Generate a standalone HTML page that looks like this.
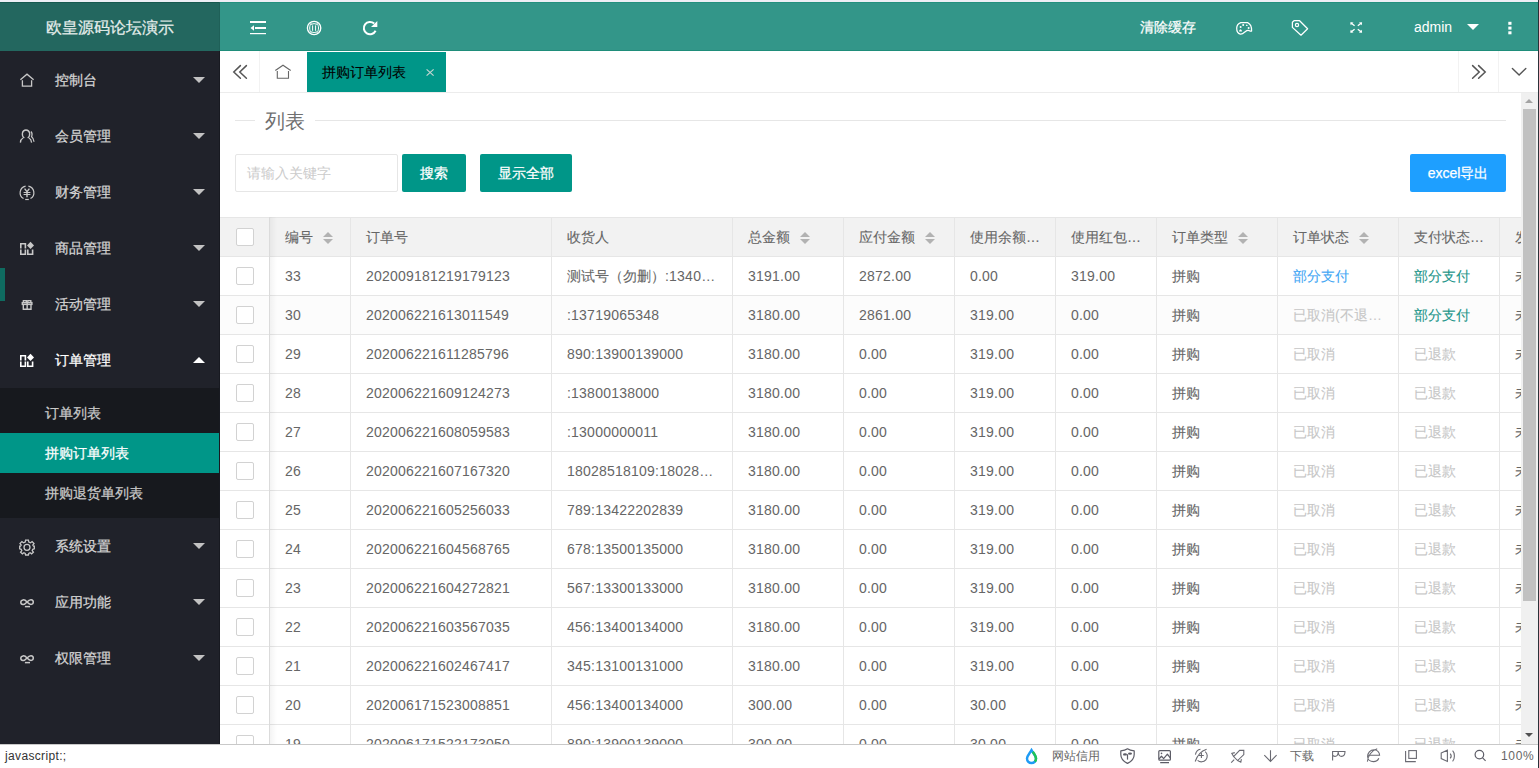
<!DOCTYPE html>
<html><head><meta charset="utf-8">
<style>
*{margin:0;padding:0;box-sizing:border-box}
html,body{width:1539px;height:768px;overflow:hidden;background:#fff;font-family:"Liberation Sans",sans-serif;font-size:14px;color:#666}
.a{position:absolute}
svg{position:absolute;overflow:visible}
#strip{left:0;top:0;width:1539px;height:2px;background:#eeeef5}
#logo{left:0;top:2px;width:220px;height:49px;background:#23675f;border-top:1px solid #17594f;color:#e6eeec;font-size:16px;line-height:49px;text-align:center}
#logo:after{content:"";position:absolute;right:0;top:-1px;width:1px;height:49px;background:#1f6058}
#hdr{left:220px;top:2px;width:1319px;height:49px;background:#339689;border-top:1px solid #23907e;border-bottom:1px solid #1f8d7a}
.hw{position:absolute;color:#fff;font-size:14px;line-height:16px}
#side{left:0;top:51px;width:220px;height:693px;background:#20222a}
#side:after{content:"";position:absolute;right:0;top:0;width:1px;height:693px;background:#181a21}
.mi{position:absolute;left:0;width:219px;height:56px;line-height:56px;color:#d4d4d4;font-size:14px}
.mi span{position:absolute;left:55px;top:0}
.mi.on{color:#fff}
.tri{position:absolute;left:193px;top:25px;width:0;height:0;border-left:6px solid transparent;border-right:6px solid transparent;border-top:6px solid #c2c2c2}
.tri.up{border-top:0;border-bottom:6px solid #fff}
#navbar{left:0;top:268px;width:5px;height:33px;background:#0f6b60}
#sub{left:0;top:388px;width:219px;height:130px;background:#17191e}
.si{position:absolute;left:0;width:219px;height:40px;line-height:40px;color:#c9c9c9;padding-left:45px}
.si.on{background:#009688;color:#fff}
#tabs{left:220px;top:51px;width:1318px;height:42px;background:#fff;border-bottom:1px solid #ececec}
.tsep{position:absolute;top:51px;width:1px;height:41px;background:#f2f2f2}
#acttab{left:307px;top:52px;width:139px;height:40px;background:#009688;color:#000;line-height:40px;padding-left:15px}
#content{left:220px;top:93px;width:1301px;height:651px;background:#fff}
#fs{left:235px;top:120px;width:1271px;height:1px;background:#e6e6e6}
#legend{left:255px;top:106px;width:60px;height:30px;background:#fff;color:#707070;font-size:20px;line-height:30px;padding-left:10px}
#inp{left:235px;top:154px;width:163px;height:38px;border:1px solid #e6e6e6;border-radius:2px;color:#cbcbcb;line-height:36px;padding-left:11px}
.btn{position:absolute;top:154px;height:38px;line-height:38px;background:#009688;color:#fff;text-align:center;border-radius:2px}
#tbl{left:220px;top:217px;width:1301px;height:527px;overflow:hidden}
.thbg{position:absolute;left:0;width:1301px;background:#f2f2f2;border-top:1px solid #e6e6e6;border-bottom:1px solid #e6e6e6}
.tr{position:absolute;left:0;width:1301px;height:39px;border-bottom:1px solid #e6e6e6;background:#fff}
.tr.hov{background:#fcfcfc}
.vl{position:absolute;top:0;width:1px;height:527px;background:#e6e6e6}
.th{position:absolute;top:1px;height:39px;line-height:39px;color:#666;white-space:nowrap}
.td{position:absolute;height:39px;line-height:39px;color:#666;white-space:nowrap}
.td.b{color:#3fa6f4}
.td.g{color:#1a9488}
.td.c{color:#c6c6c6}
.cb{position:absolute;width:18px;height:18px;border:1px solid #d2d2d2;border-radius:2px;background:#fff}
.sort{position:absolute;display:inline-block;width:10px;height:12px;margin-left:10px;top:14px}
.su{position:absolute;left:0;top:0;border-left:5px solid transparent;border-right:5px solid transparent;border-bottom:5px solid #b2b2b2}
.sd{position:absolute;left:0;top:7px;border-left:5px solid transparent;border-right:5px solid transparent;border-top:5px solid #b2b2b2}
.fshadow{position:absolute;left:49px;top:0;width:8px;height:527px;background:linear-gradient(to right,rgba(0,0,0,.05),rgba(0,0,0,0))}
#sb{left:1521px;top:93px;width:17px;height:651px;background:#f0f0f0}
.sbthumb{position:absolute;left:2px;top:16px;width:13px;height:492px;background:#c1c1c1}
.sbu{position:absolute;left:4px;top:6px;border-left:4px solid transparent;border-right:4px solid transparent;border-bottom:4px solid #a3a3a3}
.sbd{position:absolute;left:4px;top:640px;border-left:4px solid transparent;border-right:4px solid transparent;border-top:4px solid #505050}
#rline{left:1538px;top:0;width:1px;height:768px;background:#2b3139}
#status{left:0;top:744px;width:1539px;height:24px;background:#fff;border-top:1px solid #c9c9c9}
.st{position:absolute;top:748px;font-size:12px;color:#666;line-height:16px}
.td{letter-spacing:.22px}
.cj{font-style:normal;letter-spacing:0}
.mi span,.si,#logo,.btn,.hwc{-webkit-text-stroke:0.25px currentColor}
#acttab,.th,.cj{-webkit-text-stroke:0.1px currentColor}

</style></head><body>
<div id="strip" class="a"></div>
<div id="logo" class="a">欧皇源码论坛演示</div>
<div id="hdr" class="a"></div>
<svg style="left:0;top:0" width="1539" height="51" viewBox="0 0 1539 51">
 <g fill="#fff">
  <rect x="250" y="21" width="16" height="2"/>
  <rect x="255" y="27" width="11" height="2"/>
  <polygon points="250.5,28 254,25.3 254,30.7"/>
  <rect x="250" y="33" width="16" height="1.2"/>
 </g>
 <g fill="none" stroke="#fff">
  <circle cx="314.1" cy="28" r="6.7" stroke-width="1.3"/>
  <path d="M311.2 23.2 C309.2 25.8 309.2 30.2 311.2 32.8 M317 23.2 C319 25.8 319 30.2 317 32.8" stroke-width="1"/>
  <path d="M312.6 25.4 L312.6 30.8 M315.6 25.4 L315.6 30.8" stroke-width="1"/>
  <path d="M310.9 24.4 Q314.1 22.8 317.3 24.4 M310.9 31.8 Q314.1 33.4 317.3 31.8" stroke-width="1"/>
  <path d="M375.6 30.8 A6.2 6.2 0 1 1 374.2 23.5" stroke-width="2"/>
 </g>
 <polygon points="377.3,21 377.3,26.9 371,26.9" fill="#fff"/>
 <g fill="none" stroke="#fff" stroke-width="1.25" stroke-linejoin="round">
  <path d="M1240.8 22.6 L1247.6 22.6 C1250.2 23.8 1251.8 27 1251.6 31 L1250 31 C1248.5 30 1247 30.2 1245.5 31.5 C1243.5 33.2 1242 34.6 1240.4 34.2 C1238 33.5 1236.6 31 1236.7 28 C1236.8 25.5 1238.3 23.5 1240.8 22.6 Z"/>
  <path d="M1294 20.7 L1299.6 20.7 L1307.6 28.8 L1301 35.2 L1292.4 27.4 L1292.4 22.2 Z"/>
  <circle cx="1297" cy="25" r="1.6"/>
 </g>
 <g fill="#fff">
  <circle cx="1243.2" cy="24.9" r="1"/>
  <polygon points="1245.8,26 1246.8,24.2 1247.8,26"/>
  <circle cx="1240.6" cy="27" r="1"/>
  <circle cx="1248.6" cy="28" r="1"/>
  <path d="M1239 31.6 L1239.5 30 L1240.5 29.2 L1241.6 30 L1242 31.6 Z"/>
 </g>
 <g fill="none" stroke="#fff" stroke-width="1.3">
  <path d="M1351 23 L1354.6 25.8 M1361.4 23 L1357.8 25.8 M1351 32 L1354.6 29.2 M1361.4 32 L1357.8 29.2"/>
 </g>
 <g fill="#fff">
  <polygon points="1350.3,22.2 1353.5,22.6 1350.7,25.2"/>
  <polygon points="1362.1,22.2 1358.9,22.6 1361.7,25.2"/>
  <polygon points="1350.3,32.8 1353.5,32.4 1350.7,29.8"/>
  <polygon points="1362.1,32.8 1358.9,32.4 1361.7,29.8"/>
  <polygon points="1467,24 1479,24 1473,30"/>
  <rect x="1508.3" y="21.8" width="3.2" height="3"/>
  <rect x="1508.3" y="26.6" width="3.2" height="3"/>
  <rect x="1508.3" y="31.3" width="3.2" height="3"/>
 </g>
</svg>
<div class="hw hwc" style="left:1140px;top:19px">清除缓存</div>
<div class="hw" style="left:1414px;top:19px;font-size:14px">admin</div>

<div id="side" class="a"></div>
<div id="navbar" class="a"></div>
<div id="sub" class="a">
 <div class="si" style="top:5px">订单列表</div>
 <div class="si on" style="top:45px">拼购订单列表</div>
 <div class="si" style="top:85px">拼购退货单列表</div>
</div>
<div class="mi" style="top:52px"><span>控制台</span><i class="tri"></i></div>
<div class="mi" style="top:108px"><span>会员管理</span><i class="tri"></i></div>
<div class="mi" style="top:164px"><span>财务管理</span><i class="tri"></i></div>
<div class="mi" style="top:220px"><span>商品管理</span><i class="tri"></i></div>
<div class="mi" style="top:276px"><span>活动管理</span><i class="tri"></i></div>
<div class="mi on" style="top:332px"><span>订单管理</span><i class="tri up"></i></div>
<div class="mi" style="top:518px"><span>系统设置</span><i class="tri"></i></div>
<div class="mi" style="top:574px"><span>应用功能</span><i class="tri"></i></div>
<div class="mi" style="top:630px"><span>权限管理</span><i class="tri"></i></div>
<svg style="left:0;top:0" width="220" height="744" viewBox="0 0 220 744">
 <g fill="none" stroke="#c8c8c8" stroke-width="1.3">
  <path d="M20.4 79.8 L27 74.2 L33.6 79.8 M22.4 80.2 L22.4 86.2 L31.6 86.2 L31.6 80.2"/>
  <path d="M24.3 138 C22.5 136.8 22.2 134.6 22.4 133.2 C22.8 131 24.3 130 26 130 C27.7 130 29.2 131 29.6 133.2 C29.8 134.6 29.5 136.8 27.7 138"/>
  <path d="M23 138 C21.2 139 20.5 140.5 20.4 142.6 M29 138 C30.8 139 31.4 140.5 31.6 142.6"/>
  <path d="M30.8 131.6 C32 132.4 32.4 134.2 31.6 136.8 C33 137.8 33.8 139.5 34 141.8"/>
  <path d="M25.6 186.05 A6.8 6.8 0 0 0 23.5 198.6 M28.4 186.05 A6.8 6.8 0 0 1 30.5 198.6" stroke-width="1.2"/>
  <path d="M25.2 199.5 L28.8 199.5" stroke-width="1.2"/>
  <path d="M24.6 188.6 L27 191.6 L29.4 188.6 M27 191.6 L27 197.2" stroke-width="1.4"/>
  <path d="M23.6 192.5 L30.4 192.5 M23.6 194.5 L30.4 194.5" stroke-width="1"/>
 </g>
 <g fill="none" stroke-width="1.6">
  <path stroke="#c8c8c8" d="M20.8 248.6 L20.8 243.8 L25.4 243.8 L25.4 248.6 M20.8 249.6 L20.8 254.2 L25.4 254.2 L25.4 249.6 M27.8 249.6 L27.8 254.2 L32.6 254.2 L32.6 249.6"/>
  <path stroke="#ffffff" d="M20.8 360.6 L20.8 355.8 L25.4 355.8 L25.4 360.6 M20.8 361.6 L20.8 366.2 L25.4 366.2 L25.4 361.6 M27.8 361.6 L27.8 366.2 L32.6 366.2 L32.6 361.6"/>
 </g>
 <polygon points="30.5,241.8 34,245.4 30.5,249 27,245.4" fill="#c8c8c8"/>
 <polygon points="30.5,353.8 34,357.4 30.5,361 27,357.4" fill="#ffffff"/>
 <g fill="none" stroke="#c8c8c8" stroke-width="1.4">
  <path d="M23.4 302.2 L23.4 300.6 L26.3 300.6 L26.3 302 M27.8 302 L27.8 300.6 L30.8 300.6 L30.8 302.2"/>
  <rect x="22.3" y="302.6" width="9.6" height="1.8"/>
  <path d="M23.3 304.6 L23.3 309.3 L31 309.3 L31 304.6 M27.15 302.6 L27.15 309.3"/>
 </g>
 <g fill="none" stroke="#c8c8c8" stroke-width="1.3">
  <path d="M25.6 540.2 L28.4 540.2 L28.8 542 L30.6 542.8 L32.1 541.6 L34 543.6 L32.8 545.1 L33.5 546.2 L34.3 546.2 L34.3 548.8 L32.8 549.3 L32.2 550.6 L33.4 552.1 L31.6 553.8 L30.1 552.8 L28.8 553.5 L28.4 555 L25.6 555 L25.2 553.5 L23.9 552.8 L22.4 553.8 L20.6 552.1 L21.8 550.6 L21.2 549.3 L19.7 548.8 L19.7 546.2 L20.5 546.2 L21.2 545.1 L20 543.6 L21.9 541.6 L23.4 542.8 L25.2 542 Z"/>
  <circle cx="27" cy="547.3" r="3"/>
 </g>
 <g fill="none" stroke="#c8c8c8" stroke-width="1.5">
  <path d="M27 602 C25.5 600.2 24 599.7 23 599.9 C21.4 600.2 20.8 601.2 20.8 602.2 C20.8 603.3 21.6 604.4 23 604.5 C24.4 604.6 25.7 603.5 27 602 C28.3 600.5 29.6 599.6 31.1 599.7 C32.6 599.8 33.3 600.9 33.3 602.1 C33.3 603.3 32.5 604.4 31 604.4 C29.6 604.4 28.4 603.5 27 602 Z"/>
  <path d="M24.9 606.6 L30 606.6"/>
  <path d="M27 658 C25.5 656.2 24 655.7 23 655.9 C21.4 656.2 20.8 657.2 20.8 658.2 C20.8 659.3 21.6 660.4 23 660.5 C24.4 660.6 25.7 659.5 27 658 C28.3 656.5 29.6 655.6 31.1 655.7 C32.6 655.8 33.3 656.9 33.3 658.1 C33.3 659.3 32.5 660.4 31 660.4 C29.6 660.4 28.4 659.5 27 658 Z"/>
  <path d="M24.9 662.6 L30 662.6"/>
 </g>
</svg>

<div id="tabs" class="a"></div>
<div class="tsep" style="left:259px"></div>
<div class="tsep" style="left:1458px"></div>
<div class="tsep" style="left:1498px"></div>
<div id="acttab" class="a">拼购订单列表</div>
<svg style="left:0;top:0" width="1539" height="93" viewBox="0 0 1539 93">
 <g fill="none" stroke="#555" stroke-width="1.5" stroke-linecap="round">
  <path d="M240.4 65.6 L233.8 72 L240.4 78.2 M246.4 65.6 L239.8 72 L246.4 78.2"/>
  <path d="M1472.6 65.6 L1479.2 72 L1472.6 78.2 M1478.6 65.6 L1485.2 72 L1478.6 78.2"/>
  <path d="M1512.4 68.4 L1519.1 75 L1525.8 68.4" stroke-width="1.4"/>
 </g>
 <g fill="none" stroke="#666" stroke-width="1.1">
  <path d="M275.3 70.5 L283 65.2 L290.7 70.5 M277.3 71 L277.3 78.3 L288.5 78.3 L288.5 71"/>
 </g>
 <path d="M426.6 69.4 L433.6 75.6 M433.6 69.4 L426.6 75.6" fill="none" stroke="#c5d6d2" stroke-width="1.2"/>
</svg>

<div id="fs" class="a"></div>
<div id="legend" class="a">列表</div>
<div id="inp" class="a">请输入关键字</div>
<div class="btn" style="left:402px;width:64px">搜索</div>
<div class="btn" style="left:480px;width:92px">显示全部</div>
<div class="btn" style="left:1410px;width:96px;background:#1e9fff">excel导出</div>

<div id="tbl" class="a">
<div class="thbg" style="top:0;height:40px"></div>
<div class="tr" style="top:40px"></div>
<div class="tr hov" style="top:79px"></div>
<div class="tr" style="top:118px"></div>
<div class="tr" style="top:157px"></div>
<div class="tr" style="top:196px"></div>
<div class="tr" style="top:235px"></div>
<div class="tr" style="top:274px"></div>
<div class="tr" style="top:313px"></div>
<div class="tr" style="top:352px"></div>
<div class="tr" style="top:391px"></div>
<div class="tr" style="top:430px"></div>
<div class="tr" style="top:469px"></div>
<div class="tr" style="top:508px"></div>
<div class="vl" style="left:49px"></div>
<div class="vl" style="left:130px"></div>
<div class="vl" style="left:331px"></div>
<div class="vl" style="left:512px"></div>
<div class="vl" style="left:623px"></div>
<div class="vl" style="left:734px"></div>
<div class="vl" style="left:835px"></div>
<div class="vl" style="left:936px"></div>
<div class="vl" style="left:1057px"></div>
<div class="vl" style="left:1178px"></div>
<div class="vl" style="left:1279px"></div>
<div class="cb" style="left:16px;top:11px"></div>
<div class="th" style="left:65px">编号<i class="sort"><b class="su"></b><b class="sd"></b></i></div>
<div class="th" style="left:146px">订单号</div>
<div class="th" style="left:347px">收货人</div>
<div class="th" style="left:528px">总金额<i class="sort"><b class="su"></b><b class="sd"></b></i></div>
<div class="th" style="left:639px">应付金额<i class="sort"><b class="su"></b><b class="sd"></b></i></div>
<div class="th" style="left:750px">使用余额…</div>
<div class="th" style="left:851px">使用红包…</div>
<div class="th" style="left:952px">订单类型<i class="sort"><b class="su"></b><b class="sd"></b></i></div>
<div class="th" style="left:1073px">订单状态<i class="sort"><b class="su"></b><b class="sd"></b></i></div>
<div class="th" style="left:1194px">支付状态…</div>
<div class="th" style="left:1295px">发货状态</div>
<div class="cb" style="left:16px;top:50px"></div>
<div class="td" style="left:65px;top:40px">33</div>
<div class="td" style="left:146px;top:40px">202009181219179123</div>
<div class="td" style="left:347px;top:40px"><i class="cj">测试号（勿删）</i>:1340…</div>
<div class="td" style="left:528px;top:40px">3191.00</div>
<div class="td" style="left:639px;top:40px">2872.00</div>
<div class="td" style="left:750px;top:40px">0.00</div>
<div class="td" style="left:851px;top:40px">319.00</div>
<div class="td" style="left:952px;top:40px"><i class="cj">拼购</i></div>
<div class="td b" style="left:1073px;top:40px"><i class="cj">部分支付</i></div>
<div class="td g" style="left:1194px;top:40px"><i class="cj">部分支付</i></div>
<div class="td" style="left:1295px;top:40px"><i class="cj">未发货</i></div>
<div class="cb" style="left:16px;top:89px"></div>
<div class="td" style="left:65px;top:79px">30</div>
<div class="td" style="left:146px;top:79px">202006221613011549</div>
<div class="td" style="left:347px;top:79px">:13719065348</div>
<div class="td" style="left:528px;top:79px">3180.00</div>
<div class="td" style="left:639px;top:79px">2861.00</div>
<div class="td" style="left:750px;top:79px">319.00</div>
<div class="td" style="left:851px;top:79px">0.00</div>
<div class="td" style="left:952px;top:79px"><i class="cj">拼购</i></div>
<div class="td c" style="left:1073px;top:79px"><i class="cj">已取消</i>(<i class="cj">不退</i>…</div>
<div class="td g" style="left:1194px;top:79px"><i class="cj">部分支付</i></div>
<div class="td" style="left:1295px;top:79px"><i class="cj">未发货</i></div>
<div class="cb" style="left:16px;top:128px"></div>
<div class="td" style="left:65px;top:118px">29</div>
<div class="td" style="left:146px;top:118px">202006221611285796</div>
<div class="td" style="left:347px;top:118px">890:13900139000</div>
<div class="td" style="left:528px;top:118px">3180.00</div>
<div class="td" style="left:639px;top:118px">0.00</div>
<div class="td" style="left:750px;top:118px">319.00</div>
<div class="td" style="left:851px;top:118px">0.00</div>
<div class="td" style="left:952px;top:118px"><i class="cj">拼购</i></div>
<div class="td c" style="left:1073px;top:118px"><i class="cj">已取消</i></div>
<div class="td c" style="left:1194px;top:118px"><i class="cj">已退款</i></div>
<div class="td" style="left:1295px;top:118px"><i class="cj">未发货</i></div>
<div class="cb" style="left:16px;top:167px"></div>
<div class="td" style="left:65px;top:157px">28</div>
<div class="td" style="left:146px;top:157px">202006221609124273</div>
<div class="td" style="left:347px;top:157px">:13800138000</div>
<div class="td" style="left:528px;top:157px">3180.00</div>
<div class="td" style="left:639px;top:157px">0.00</div>
<div class="td" style="left:750px;top:157px">319.00</div>
<div class="td" style="left:851px;top:157px">0.00</div>
<div class="td" style="left:952px;top:157px"><i class="cj">拼购</i></div>
<div class="td c" style="left:1073px;top:157px"><i class="cj">已取消</i></div>
<div class="td c" style="left:1194px;top:157px"><i class="cj">已退款</i></div>
<div class="td" style="left:1295px;top:157px"><i class="cj">未发货</i></div>
<div class="cb" style="left:16px;top:206px"></div>
<div class="td" style="left:65px;top:196px">27</div>
<div class="td" style="left:146px;top:196px">202006221608059583</div>
<div class="td" style="left:347px;top:196px">:13000000011</div>
<div class="td" style="left:528px;top:196px">3180.00</div>
<div class="td" style="left:639px;top:196px">0.00</div>
<div class="td" style="left:750px;top:196px">319.00</div>
<div class="td" style="left:851px;top:196px">0.00</div>
<div class="td" style="left:952px;top:196px"><i class="cj">拼购</i></div>
<div class="td c" style="left:1073px;top:196px"><i class="cj">已取消</i></div>
<div class="td c" style="left:1194px;top:196px"><i class="cj">已退款</i></div>
<div class="td" style="left:1295px;top:196px"><i class="cj">未发货</i></div>
<div class="cb" style="left:16px;top:245px"></div>
<div class="td" style="left:65px;top:235px">26</div>
<div class="td" style="left:146px;top:235px">202006221607167320</div>
<div class="td" style="left:347px;top:235px">18028518109:18028…</div>
<div class="td" style="left:528px;top:235px">3180.00</div>
<div class="td" style="left:639px;top:235px">0.00</div>
<div class="td" style="left:750px;top:235px">319.00</div>
<div class="td" style="left:851px;top:235px">0.00</div>
<div class="td" style="left:952px;top:235px"><i class="cj">拼购</i></div>
<div class="td c" style="left:1073px;top:235px"><i class="cj">已取消</i></div>
<div class="td c" style="left:1194px;top:235px"><i class="cj">已退款</i></div>
<div class="td" style="left:1295px;top:235px"><i class="cj">未发货</i></div>
<div class="cb" style="left:16px;top:284px"></div>
<div class="td" style="left:65px;top:274px">25</div>
<div class="td" style="left:146px;top:274px">202006221605256033</div>
<div class="td" style="left:347px;top:274px">789:13422202839</div>
<div class="td" style="left:528px;top:274px">3180.00</div>
<div class="td" style="left:639px;top:274px">0.00</div>
<div class="td" style="left:750px;top:274px">319.00</div>
<div class="td" style="left:851px;top:274px">0.00</div>
<div class="td" style="left:952px;top:274px"><i class="cj">拼购</i></div>
<div class="td c" style="left:1073px;top:274px"><i class="cj">已取消</i></div>
<div class="td c" style="left:1194px;top:274px"><i class="cj">已退款</i></div>
<div class="td" style="left:1295px;top:274px"><i class="cj">未发货</i></div>
<div class="cb" style="left:16px;top:323px"></div>
<div class="td" style="left:65px;top:313px">24</div>
<div class="td" style="left:146px;top:313px">202006221604568765</div>
<div class="td" style="left:347px;top:313px">678:13500135000</div>
<div class="td" style="left:528px;top:313px">3180.00</div>
<div class="td" style="left:639px;top:313px">0.00</div>
<div class="td" style="left:750px;top:313px">319.00</div>
<div class="td" style="left:851px;top:313px">0.00</div>
<div class="td" style="left:952px;top:313px"><i class="cj">拼购</i></div>
<div class="td c" style="left:1073px;top:313px"><i class="cj">已取消</i></div>
<div class="td c" style="left:1194px;top:313px"><i class="cj">已退款</i></div>
<div class="td" style="left:1295px;top:313px"><i class="cj">未发货</i></div>
<div class="cb" style="left:16px;top:362px"></div>
<div class="td" style="left:65px;top:352px">23</div>
<div class="td" style="left:146px;top:352px">202006221604272821</div>
<div class="td" style="left:347px;top:352px">567:13300133000</div>
<div class="td" style="left:528px;top:352px">3180.00</div>
<div class="td" style="left:639px;top:352px">0.00</div>
<div class="td" style="left:750px;top:352px">319.00</div>
<div class="td" style="left:851px;top:352px">0.00</div>
<div class="td" style="left:952px;top:352px"><i class="cj">拼购</i></div>
<div class="td c" style="left:1073px;top:352px"><i class="cj">已取消</i></div>
<div class="td c" style="left:1194px;top:352px"><i class="cj">已退款</i></div>
<div class="td" style="left:1295px;top:352px"><i class="cj">未发货</i></div>
<div class="cb" style="left:16px;top:401px"></div>
<div class="td" style="left:65px;top:391px">22</div>
<div class="td" style="left:146px;top:391px">202006221603567035</div>
<div class="td" style="left:347px;top:391px">456:13400134000</div>
<div class="td" style="left:528px;top:391px">3180.00</div>
<div class="td" style="left:639px;top:391px">0.00</div>
<div class="td" style="left:750px;top:391px">319.00</div>
<div class="td" style="left:851px;top:391px">0.00</div>
<div class="td" style="left:952px;top:391px"><i class="cj">拼购</i></div>
<div class="td c" style="left:1073px;top:391px"><i class="cj">已取消</i></div>
<div class="td c" style="left:1194px;top:391px"><i class="cj">已退款</i></div>
<div class="td" style="left:1295px;top:391px"><i class="cj">未发货</i></div>
<div class="cb" style="left:16px;top:440px"></div>
<div class="td" style="left:65px;top:430px">21</div>
<div class="td" style="left:146px;top:430px">202006221602467417</div>
<div class="td" style="left:347px;top:430px">345:13100131000</div>
<div class="td" style="left:528px;top:430px">3180.00</div>
<div class="td" style="left:639px;top:430px">0.00</div>
<div class="td" style="left:750px;top:430px">319.00</div>
<div class="td" style="left:851px;top:430px">0.00</div>
<div class="td" style="left:952px;top:430px"><i class="cj">拼购</i></div>
<div class="td c" style="left:1073px;top:430px"><i class="cj">已取消</i></div>
<div class="td c" style="left:1194px;top:430px"><i class="cj">已退款</i></div>
<div class="td" style="left:1295px;top:430px"><i class="cj">未发货</i></div>
<div class="cb" style="left:16px;top:479px"></div>
<div class="td" style="left:65px;top:469px">20</div>
<div class="td" style="left:146px;top:469px">202006171523008851</div>
<div class="td" style="left:347px;top:469px">456:13400134000</div>
<div class="td" style="left:528px;top:469px">300.00</div>
<div class="td" style="left:639px;top:469px">0.00</div>
<div class="td" style="left:750px;top:469px">30.00</div>
<div class="td" style="left:851px;top:469px">0.00</div>
<div class="td" style="left:952px;top:469px"><i class="cj">拼购</i></div>
<div class="td c" style="left:1073px;top:469px"><i class="cj">已取消</i></div>
<div class="td c" style="left:1194px;top:469px"><i class="cj">已退款</i></div>
<div class="td" style="left:1295px;top:469px"><i class="cj">未发货</i></div>
<div class="cb" style="left:16px;top:518px"></div>
<div class="td" style="left:65px;top:508px">19</div>
<div class="td" style="left:146px;top:508px">202006171522173050</div>
<div class="td" style="left:347px;top:508px">890:13900139000</div>
<div class="td" style="left:528px;top:508px">300.00</div>
<div class="td" style="left:639px;top:508px">0.00</div>
<div class="td" style="left:750px;top:508px">30.00</div>
<div class="td" style="left:851px;top:508px">0.00</div>
<div class="td" style="left:952px;top:508px"><i class="cj">拼购</i></div>
<div class="td c" style="left:1073px;top:508px"><i class="cj">已取消</i></div>
<div class="td c" style="left:1194px;top:508px"><i class="cj">已退款</i></div>
<div class="td" style="left:1295px;top:508px"><i class="cj">未发货</i></div>
<div class="fshadow"></div>
</div>
<div id="sb" class="a"><i class="sbu"></i><i class="sbthumb"></i><i class="sbd"></i></div>
<div id="status" class="a"></div>
<div class="st" style="left:5px;top:748px;color:#333;letter-spacing:.35px">javascript:;</div>
<div class="st" style="left:1052px;top:748px;color:#666">网站信用</div>
<div class="st" style="left:1290px;top:748px;color:#666">下载</div>
<div class="st" style="left:1501px;top:748px;color:#666;letter-spacing:.7px">100%</div>
<svg style="left:0;top:0" width="1539" height="768" viewBox="0 0 1539 768">
 <path d="M1031.5 750.2 C1029.5 753.5 1027 755.8 1027 758.6 C1027 761.2 1029 763 1031.5 763 C1034 763 1036 761.2 1036 758.6 C1036 755.8 1033.5 753.5 1031.5 750.2 Z" fill="none" stroke="#1e9bf5" stroke-width="2.5"/>
 <path d="M1032.8 751.8 C1034.5 754 1036 756 1036 758.6 C1036 760 1035.5 761 1034.8 761.6" fill="none" stroke="#1fc356" stroke-width="2.5"/>
 <g fill="none" stroke="#5c5c66" stroke-width="1.2" stroke-linejoin="round">
  <path d="M1127.5 748.8 C1125.5 750.2 1123.5 750.6 1120.8 750.8 L1120.8 754.5 C1120.8 758.5 1123.5 761.5 1127.5 763.4 C1131.5 761.5 1134.2 758.5 1134.2 754.5 L1134.2 750.8 C1131.5 750.6 1129.5 750.2 1127.5 748.8 Z"/>
  <path d="M1127.5 754.2 L1127.5 759.6"/>
  <rect x="1158.8" y="750.6" width="11.6" height="9.6" rx="1"/>
  <path d="M1159 759 L1161.5 756.2 L1163.6 758.6 L1167.4 754.2 L1170.2 757.8 M1160.2 762.6 L1169 762.6"/>
 </g>
 <g fill="#5c5c66">
  <ellipse cx="1125" cy="754.4" rx="2" ry="1.2"/>
  <ellipse cx="1130" cy="753.6" rx="2" ry="1.2"/>
  <circle cx="1161.5" cy="753.4" r="0.8"/>
 </g>
 <g fill="none" stroke="#6a6a72" stroke-width="1.1">
  <path d="M1205.2 751.6 A5.6 5.6 0 1 1 1197.6 760.4"/>
  <path d="M1195.2 761.5 C1197 756 1201 751 1206.6 749.2 M1195.4 754.6 C1196 751.5 1198 749.5 1200.5 749.2"/>
  <path d="M1199 755.5 L1203.8 755.5 M1201.4 753.1 L1201.4 757.9"/>
  <path d="M1233.6 756.6 L1239.6 750.4 L1243.8 750.4 L1243.8 754.6 L1237.6 760.6 Z M1233.6 756.6 L1231.8 753.4 L1234.8 752.6 M1237.6 760.6 L1240.8 762.2 L1241.4 759.2 M1234.2 759.6 L1231.2 762.6"/>
  <path d="M1270.5 750.2 L1270.5 761.4 M1264.3 755.2 L1270.5 761.4 L1276.6 755.2"/>
  <path d="M1332.6 760.6 L1332.6 751.5 L1345 751.5 C1345 754.5 1344 756.4 1341.5 756.4 C1339.5 756.4 1338.5 755 1338.2 752 C1338 755 1337 756.4 1335 756.4 C1333.8 756.4 1333 755.8 1332.6 755"/>
  <path d="M1367.6 755.2 L1379.6 755.2 C1379.6 752 1377 749.8 1374.2 749.8 C1370 749.8 1367.6 753 1367.6 756.5 C1367.6 759.8 1370.5 761.6 1373.4 761.6 C1376 761.6 1378 760.2 1378.8 758.2 M1367.4 761.6 C1367.8 756 1371.5 750.5 1377.2 748.8"/>
  <rect x="1408.8" y="750.6" width="7.6" height="7.8"/>
  <path d="M1405.6 751 L1405.6 761.6 L1415.8 761.6"/>
  <path d="M1441.2 753 L1447.4 750.2 L1447.4 761.4 L1441.2 758.6 Z M1450.2 753.6 C1451.4 755 1451.4 757 1450.2 758.4 M1452.6 750.6 C1455 753 1455 759 1452.6 761.4"/>
 </g>
 <g fill="none" stroke="#5c5c66" stroke-width="1.2">
  <circle cx="1479.4" cy="754.6" r="4.3"/>
  <path d="M1482.6 757.8 L1485.6 760.8"/>
 </g>
</svg>

<div id="rline" class="a"></div>
</body></html>
